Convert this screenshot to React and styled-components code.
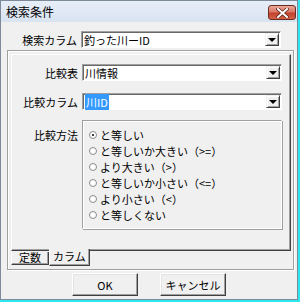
import React from 'react';
import styled, { createGlobalStyle } from 'styled-components';

const GlobalStyle = createGlobalStyle`
  html, body {
    margin: 0;
    padding: 0;
    background: #ffffff;
  }
  body {
    font-family: "Noto Sans CJK JP", "Noto Sans", sans-serif;
    font-size: 11px;
    color: #000;
  }
  * {
    box-sizing: border-box;
  }
`;

const Screen = styled.div`
  width: 300px;
  height: 302px;
  border-right: 2px solid #2ee6f0;
  border-bottom: 2px solid #2ee6f0;
`;

const Window = styled.div`
  width: 298px;
  height: 300px;
  display: flex;
  flex-direction: column;
  border: 1px solid #7d8a99;
  background: #f0f0f0;
`;

const TitleBar = styled.div`
  height: 21px;
  display: flex;
  align-items: center;
  justify-content: space-between;
  padding: 0 1px 0 5px;
  background: linear-gradient(#e6eef8, #d9e4f1);
`;

const Title = styled.span`
  font-size: 12px;
  line-height: 21px;
`;

const CloseButton = styled.div`
  width: 28px;
  height: 15px;
  margin-top: 2px;
  display: flex;
  align-items: center;
  justify-content: center;
  border: 1px solid #6b2c22;
  border-radius: 3px;
  background: linear-gradient(#eaa898 0%, #d97766 45%, #c3412c 55%, #d3634a 100%);
`;

const Body = styled.div`
  flex: 1;
  display: flex;
  flex-direction: column;
  padding: 0 3px 0 6px;
`;

const Row = styled.div`
  display: grid;
  grid-template-columns: ${p => p.$label}px 200px;
  align-items: center;
`;

const Label = styled.div`
  text-align: right;
  padding-right: 4px;
  line-height: 16px;
  align-self: ${p => p.$top ? 'start' : 'center'};
  margin-top: ${p => p.$top ? 7 : 0}px;
`;

const TopRow = styled(Row)`
  margin-top: 9px;
`;

const Combo = styled.div`
  height: 17px;
  display: flex;
  align-items: center;
  background: #fff;
  border-top: 1px solid #a0a0a0;
  border-left: 1px solid #a0a0a0;
  border-right: 1px solid #fff;
  border-bottom: 1px solid #fff;
  box-shadow: inset 1px 1px 0 #696969;
  padding-left: 2px;
`;

const ComboText = styled.span`
  flex: 1;
  line-height: 14px;
  white-space: nowrap;
`;

const Selected = styled.span`
  background: #3399ff;
  color: #fff;
  padding: 0 1px;
`;

const ArrowButton = styled.div`
  width: 14px;
  height: 13px;
  margin-right: 1px;
  display: flex;
  align-items: center;
  justify-content: center;
  background: #f0f0f0;
  border-top: 1px solid #f0f0f0;
  border-left: 1px solid #f0f0f0;
  border-right: 1px solid #404040;
  border-bottom: 1px solid #404040;
  box-shadow: inset 1px 1px 0 #fff, inset -1px -1px 0 #a0a0a0;
`;

const Arrow = styled.span`
  width: 0;
  height: 0;
  border-left: 4px solid transparent;
  border-right: 4px solid transparent;
  border-top: 4px solid #000;
  margin-top: 1px;
`;

const TabFrame = styled.div`
  margin-top: 2px;
  height: 220px;
  display: flex;
  flex-direction: column;
  padding: 3px 2px 0 3px;
  border: 1px solid #a0a0a0;
  box-shadow: inset 1px 1px 0 #fff, 1px 1px 0 #fff;
`;

const TabPage = styled.div`
  height: 197px;
  display: flex;
  flex-direction: column;
  gap: 12px;
  padding-top: 9px;
  border-top: 1px solid #fff;
  border-left: 1px solid #fff;
  border-right: 1px solid #404040;
  border-bottom: 1px solid #404040;
  box-shadow: inset -1px -1px 0 #a0a0a0;
`;

const GroupRow = styled(Row)`
  margin-top: -2px;
`;

const Group = styled.div`
  width: 200px;
  height: 109px;
  padding: 6px 0 0 6px;
  border-top: 1px solid #a0a0a0;
  border-left: 1px solid #a0a0a0;
  border-right: 1px solid #fff;
  border-bottom: 1px solid #fff;
  box-shadow: 1px 1px 0 #a0a0a0, inset 1px 1px 0 #fff;
`;

const Option = styled.div`
  height: 16px;
  display: flex;
  align-items: center;
  gap: 3px;
  white-space: nowrap;
`;

const Radio = styled.span`
  width: 8px;
  height: 8px;
  border-radius: 50%;
  border: 1px solid #8a8a8a;
  background: #fff;
  display: flex;
  align-items: center;
  justify-content: center;
  &::after {
    content: '';
    width: 2px;
    height: 2px;
    border-radius: 50%;
    background: ${p => p.$checked ? '#000' : 'transparent'};
  }
`;

const TabRow = styled.div`
  display: flex;
  align-items: flex-start;
  margin-top: -2px;
  position: relative;
`;

const Tab = styled.div`
  height: ${p => p.$active ? 17 : 13}px;
  margin-top: ${p => p.$active ? 0 : 3}px;
  padding: 0 ${p => p.$active ? 3 : 7}px;
  line-height: ${p => p.$active ? 15 : 11}px;
  background: #f0f0f0;
  border-left: 1px solid #fff;
  border-right: 1px solid #404040;
  border-bottom: 1px solid #404040;
  box-shadow: inset -1px -1px 0 #a0a0a0;
`;

const ButtonRow = styled.div`
  margin-top: 3px;
  display: flex;
  justify-content: center;
  gap: 22px;
  padding-right: 3px;
`;

const Button = styled.div`
  width: 66px;
  height: 23px;
  display: flex;
  align-items: center;
  justify-content: center;
  background: #f0f0f0;
  border-top: 1px solid #fff;
  border-left: 1px solid #fff;
  border-right: 1px solid #404040;
  border-bottom: 1px solid #404040;
  box-shadow: inset -1px -1px 0 #a0a0a0, inset 1px 1px 0 #e3e3e3;
`;

const options = [
  'と等しい',
  'と等しいか大きい（>=）',
  'より大きい（>）',
  'と等しいか小さい（<=）',
  'より小さい（<）',
  'と等しくない',
];

const ComboBox = ({ children }) => (
  <Combo>
    <ComboText>{children}</ComboText>
    <ArrowButton><Arrow /></ArrowButton>
  </Combo>
);

export default function App() {
  return (
    <>
      <GlobalStyle />
      <Screen>
        <Window>
          <TitleBar>
            <Title>検索条件</Title>
            <CloseButton>
              <svg width="13" height="10" viewBox="0 0 13 10">
                <path d="M2 1 L11 9 M11 1 L2 9" stroke="#5a1e14" strokeWidth="3.4" strokeLinecap="square" />
                <path d="M2 1 L11 9 M11 1 L2 9" stroke="#fff" strokeWidth="2" strokeLinecap="square" />
              </svg>
            </CloseButton>
          </TitleBar>
          <Body>
            <TopRow $label={74}>
              <Label>検索カラム</Label>
              <ComboBox>釣った川ーID</ComboBox>
            </TopRow>
            <TabFrame>
              <TabPage>
                <Row $label={70}>
                  <Label>比較表</Label>
                  <ComboBox>川情報</ComboBox>
                </Row>
                <Row $label={70}>
                  <Label>比較カラム</Label>
                  <ComboBox><Selected>川ID</Selected></ComboBox>
                </Row>
                <GroupRow $label={70}>
                  <Label $top>比較方法</Label>
                  <Group>
                    {options.map((o, i) => (
                      <Option key={o}>
                        <Radio $checked={i === 0} />
                        {o}
                      </Option>
                    ))}
                  </Group>
                </GroupRow>
              </TabPage>
              <TabRow>
                <Tab>定数</Tab>
                <Tab $active>カラム</Tab>
              </TabRow>
            </TabFrame>
            <ButtonRow>
              <Button>OK</Button>
              <Button>キャンセル</Button>
            </ButtonRow>
          </Body>
        </Window>
      </Screen>
    </>
  );
}
